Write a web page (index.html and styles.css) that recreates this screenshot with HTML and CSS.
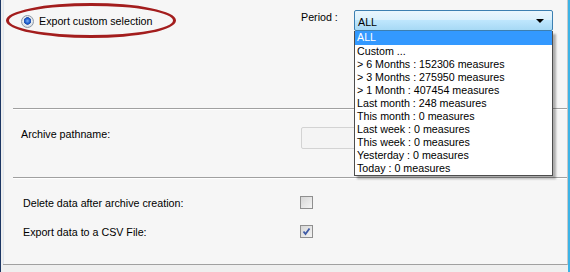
FILE: index.html
```html
<!DOCTYPE html>
<html lang="en">
<head>
  <meta charset="UTF-8">
  <title>Archive Export</title>
  <link rel="stylesheet" href="styles.css">
</head>
<body>
  <div class="window">
    <div class="panel">
      <div class="top">
        <div class="mark"></div>
        <label class="radio-opt">
          <span class="radio"></span>
          <span>Export custom selection</span>
        </label>
        <div class="period">
          <span class="period-label">Period :</span>
          <div class="combo">
            <div class="combo-box">
              <span>ALL</span>
              <span class="arrow"></span>
            </div>
            <ul class="list">
              <li class="selected">ALL</li>
              <li>Custom ...</li>
              <li>&gt; 6 Months : 152306 measures</li>
              <li>&gt; 3 Months : 275950 measures</li>
              <li>&gt; 1 Month : 407454 measures</li>
              <li>Last month : 248 measures</li>
              <li>This month : 0 measures</li>
              <li>Last week : 0 measures</li>
              <li>This week : 0 measures</li>
              <li>Yesterday : 0 measures</li>
              <li>Today : 0 measures</li>
            </ul>
          </div>
        </div>
      </div>

      <div class="sep"></div>

      <div class="archive">
        <span class="field-label">Archive pathname:</span>
        <div class="textbox"></div>
      </div>

      <div class="sep"></div>

      <div class="checks">
        <div class="check-row">
          <span class="check-label">Delete data after archive creation:</span>
          <span class="checkbox"></span>
        </div>
        <div class="check-row">
          <span class="check-label">Export data to a CSV File:</span>
          <span class="checkbox checked">
            <svg width="11" height="11" viewBox="0 0 11 11"><path d="M2.5 5.5 L4.5 8 L8.5 2.5" fill="none" stroke="#3e5aa6" stroke-width="1.8"/></svg>
          </span>
        </div>
      </div>
    </div>
    <div class="footer"></div>
  </div>
</body>
</html>
```

FILE: styles.css
```css
body {
  margin: 0;
  font-family: "Liberation Sans", Arial, sans-serif;
  font-size: 10.7px;
  color: #000;
}
.window {
  width: 570px;
  height: 272px;
  box-sizing: border-box;
  border-left: 1px solid #1d3764;
  border-right: 2px solid #3cb3e6;
  background: #efefef;
}
.panel {
  height: 265px;
  box-sizing: border-box;
  background: #f6f6f6;
  border-right: 1px solid #c9c9c9;
  border-bottom: 1px solid #a0a0a0;
  box-shadow: inset 1px 0 #dfe6ee;
  margin-left: 2px;
}
.top {
  position: relative;
  height: 108px;
  box-sizing: border-box;
  padding-top: 10px;
  display: grid;
  grid-template-columns: 297px 1fr;
  align-items: start;
}
.mark {
  position: absolute;
  left: 3px;
  top: 3px;
  width: 170px;
  height: 35px;
  box-sizing: border-box;
  border: 3px solid #a31d1d;
  border-radius: 50%;
}
.radio-opt {
  display: flex;
  align-items: center;
  gap: 5px;
  padding-left: 18px;
  height: 22px;
}
.radio {
  width: 13px;
  height: 13px;
  box-sizing: border-box;
  border-radius: 50%;
  border: 1px solid #8e99a6;
  background: radial-gradient(circle at 50% 45%, #7fb2f0 0, #1c5ccf 2.5px, #2a55a8 3.5px, #e8ecf0 4px, #dadfe5 6px);
}
.period {
  display: flex;
  align-items: flex-start;
}
.period-label {
  width: 53px;
  padding-left: 1px;
  margin-top: 1px;
  line-height: 13px;
}
.combo {
  position: relative;
  width: 199px;
}
.combo-box {
  height: 21px;
  box-sizing: border-box;
  border: 1px solid #3c7fb1;
  border-radius: 2px;
  background: linear-gradient(#eaf6fd, #d9f0fc 50%, #bee6fd 50%, #a7d9f5);
  display: flex;
  align-items: center;
  justify-content: space-between;
  padding: 3px 8px 0 3px;
}
.arrow {
  width: 0;
  height: 0;
  margin-top: -2px;
  border-left: 4px solid transparent;
  border-right: 4px solid transparent;
  border-top: 4px solid #000;
}
.list {
  position: absolute;
  top: 21px;
  left: 0;
  right: 0;
  margin: 0;
  padding: 0;
  list-style: none;
  background: #fff;
  border: 1px solid #4d4d4d;
  border-top: none;
  box-shadow: 3px 3px 2px rgba(0, 0, 0, 0.3);
}
.list li {
  height: 13px;
  line-height: 13px;
  padding-left: 2px;
  white-space: nowrap;
}
.list li.selected {
  background: #3399ff;
  color: #fff;
  height: 14px;
}
.sep {
  height: 0;
  margin-left: 10px;
  border-top: 1px solid #a0a0a0;
  border-bottom: 1px solid #fff;
}
.archive {
  height: 67px;
  box-sizing: border-box;
  padding-top: 17px;
  display: grid;
  grid-template-columns: 298px 1fr;
  align-items: start;
}
.field-label {
  padding-left: 18px;
  margin-top: 1px;
  line-height: 13px;
}
.textbox {
  width: 120px;
  height: 22px;
  box-sizing: border-box;
  border: 1px solid #d3d3d3;
  border-radius: 2px;
  background: #f4f4f4;
}
.checks {
  padding-top: 17px;
  display: flex;
  flex-direction: column;
  gap: 16px;
}
.check-row {
  display: grid;
  grid-template-columns: 297px 1fr;
  align-items: center;
  height: 13px;
}
.check-label {
  padding-left: 20px;
}
.checkbox {
  width: 13px;
  height: 13px;
  box-sizing: border-box;
  border: 1px solid #8f8f8f;
  background: linear-gradient(135deg, #d6d6d6, #f4f4f4);
  display: flex;
  align-items: center;
  justify-content: center;
}
.footer {
  height: 7px;
}
```
